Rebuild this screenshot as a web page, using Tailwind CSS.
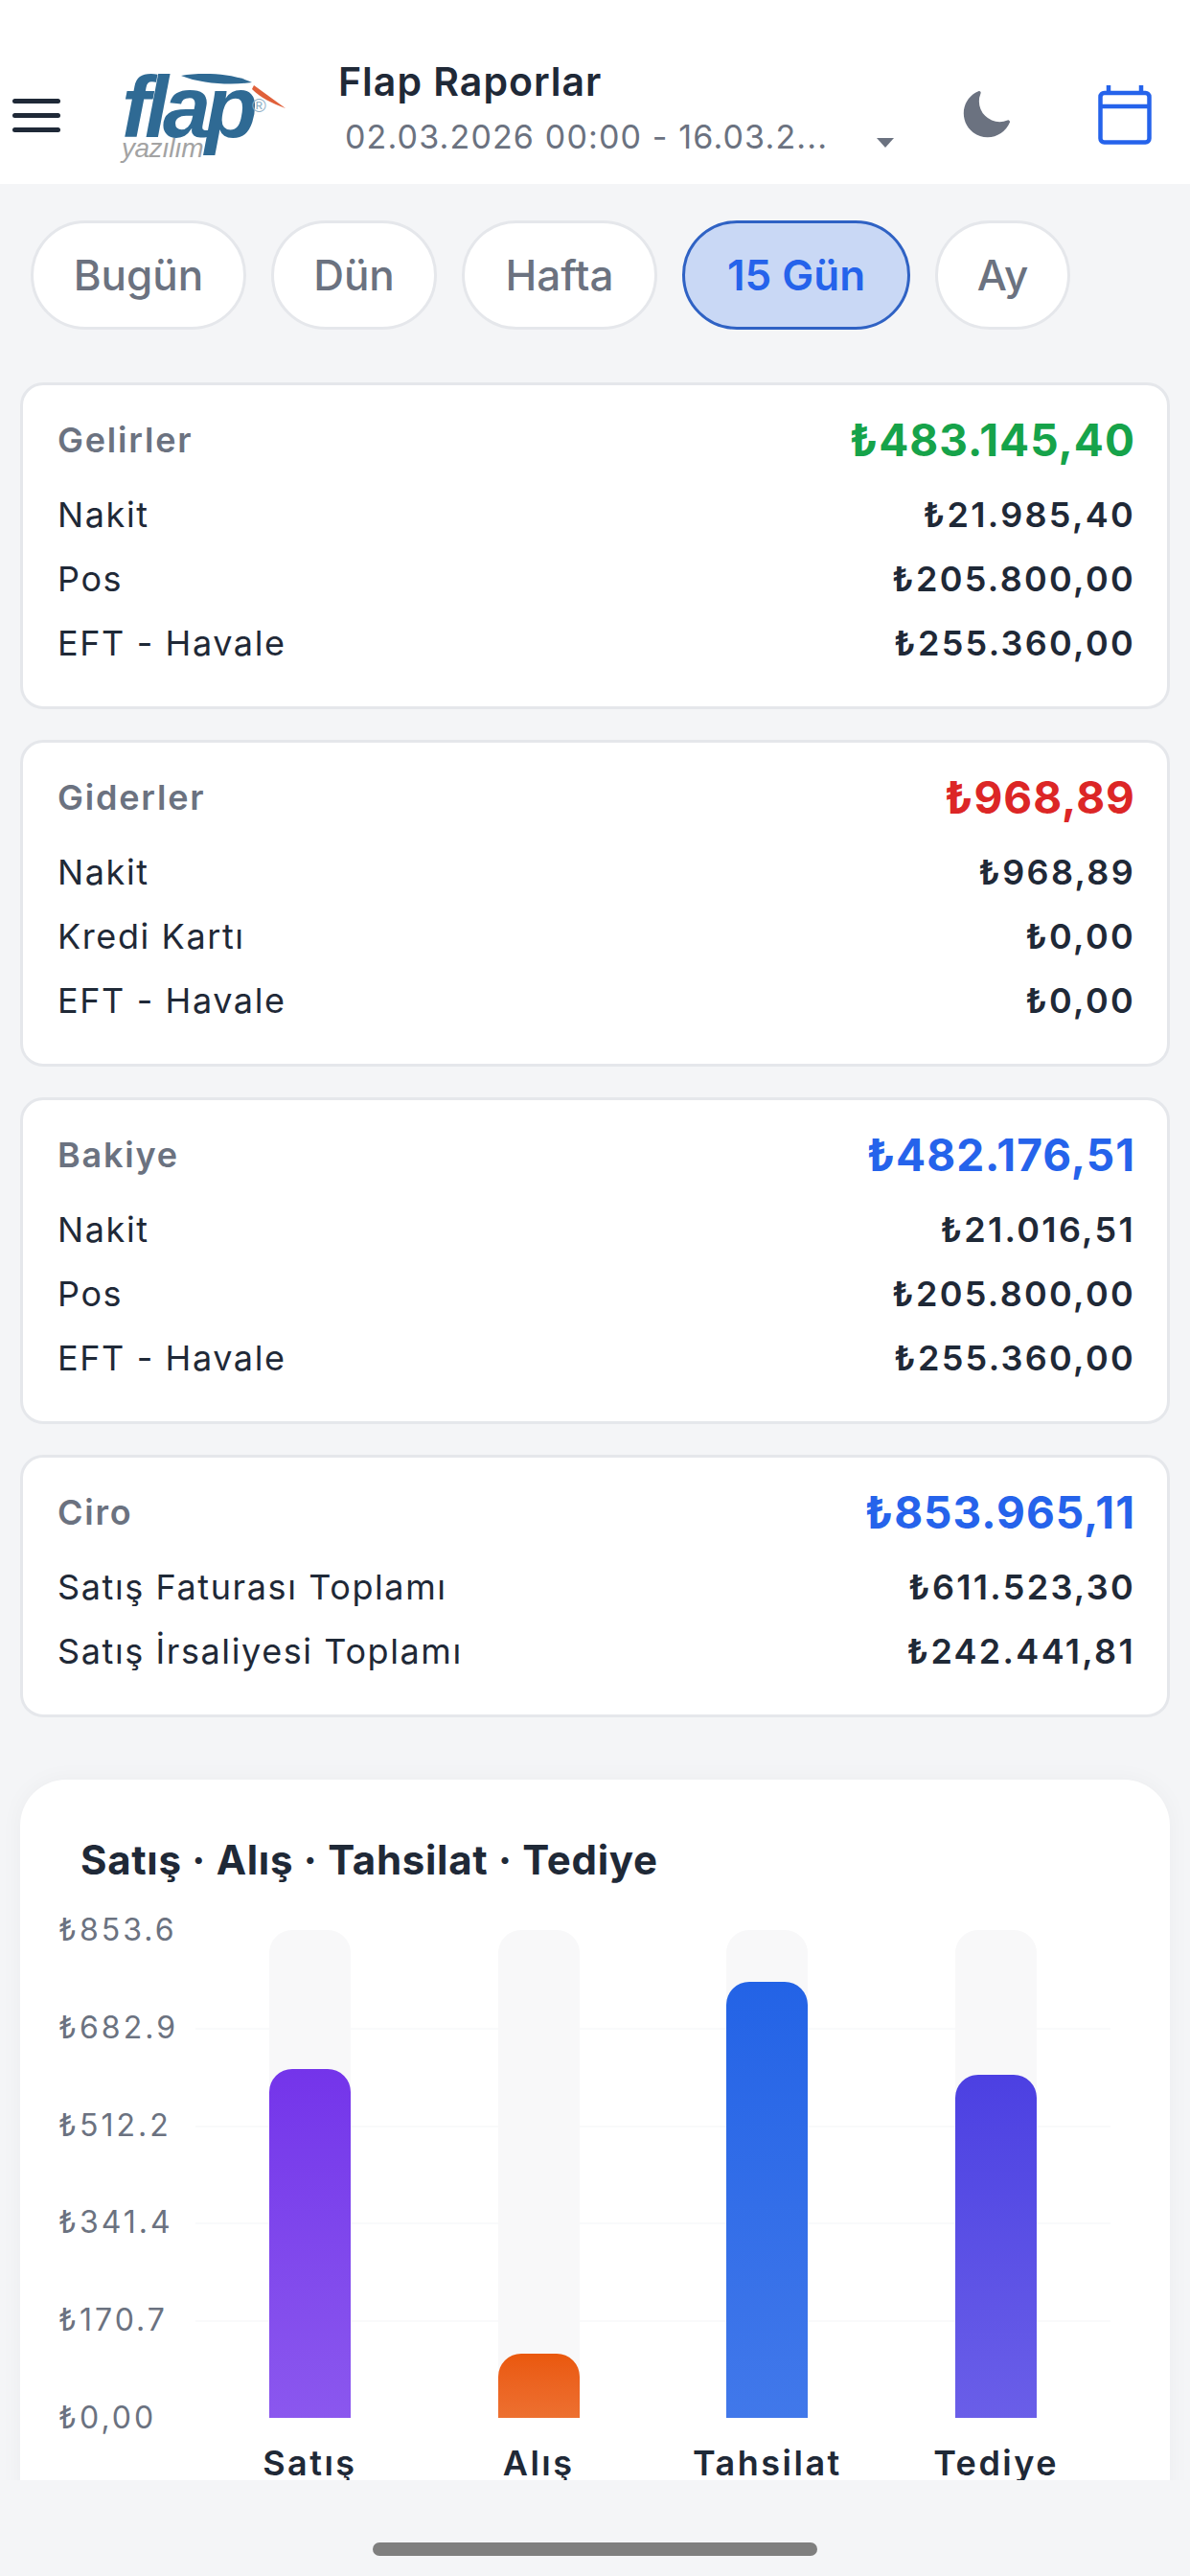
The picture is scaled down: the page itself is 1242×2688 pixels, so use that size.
<!DOCTYPE html>
<html lang="tr">
<head>
  <meta charset="UTF-8" />
  <title>Flap Raporlar</title>
  <script src="https://cdn.jsdelivr.net/npm/@tailwindcss/browser@4"></script>
</head>
<body class="bg-[#f4f5f7] text-[#1f2937] font-['Inter','Noto_Sans',sans-serif]">
  <div class="w-[1242px] h-[2688px] flex flex-col overflow-hidden">

    <!-- header -->
    <header class="h-[192px] shrink-0 bg-white flex items-start">
      <div class="w-[50px] ml-[13px] mt-[103px] flex flex-col gap-[10px]">
        <span class="h-[5px] bg-[#1f2937] rounded-full"></span>
        <span class="h-[5px] bg-[#1f2937] rounded-full"></span>
        <span class="h-[5px] bg-[#1f2937] rounded-full"></span>
      </div>

      <!-- logo -->
      <div class="relative w-[176px] h-[96px] ml-[64px] mt-[72px] shrink-0">
        <span class="absolute left-[0px] top-[-10px] text-[90px] leading-[100px] font-['Liberation_Sans'] font-bold italic tracking-[-6px] text-[#2f6a94]">flap</span>
        <span class="absolute left-[0px] top-[70px] text-[28px] leading-[26px] font-['Liberation_Sans'] italic tracking-[-0.5px] text-[#a3a3a3]">yazılım</span>
        <span class="absolute left-[136px] top-[28px] text-[20px] leading-[20px] font-['Liberation_Sans'] text-[#8fb0c6]">®</span>
        <svg class="absolute left-0 top-0" width="176" height="60" viewBox="0 0 176 60">
          <path d="M62 7C85 3 118 5 136 14C116 17 84 16 62 7Z" fill="#2f6a94" />
          <path d="M138 17L171 41C157 36 145 30 136 21Z" fill="#e0603a" />
        </svg>
      </div>

      <div class="w-[640px] ml-[50px] mt-[60px] shrink-0">
        <div class="text-[41px] leading-[50px] font-semibold tracking-[1px]">Flap Raporlar</div>
        <div class="flex items-center mt-[11px] ml-[7px]">
          <span class="text-[34px] leading-[44px] tracking-[1.15px] text-[#6b7280] whitespace-nowrap">02.03.2026 00:00 - 16.03.2...</span>
          <span class="ml-[51px] mt-[12px] w-0 h-0 border-x-[9px] border-x-transparent border-t-[10px] border-t-[#6b7280]"></span>
        </div>
      </div>

      <svg class="ml-[11px] mt-[95px] shrink-0" width="50" height="50" viewBox="1.5 1.5 21 21" fill="#6b7280">
        <path d="M9.528 1.718a.75.75 0 01.162.819A8.97 8.97 0 009 6a9 9 0 009 9 8.97 8.97 0 003.463-.69.75.75 0 01.981.98 10.503 10.503 0 01-9.694 6.46c-5.799 0-10.5-4.701-10.5-10.5 0-4.368 2.667-8.112 6.46-9.694a.75.75 0 01.818.162z" />
      </svg>

      <svg class="ml-[92px] mt-[88px] shrink-0" width="56" height="63" viewBox="0 0 56 63" fill="none" stroke="#2563eb" stroke-width="4.5">
        <rect x="2.5" y="9" width="51" height="51.5" rx="4" />
        <path d="M2.5 23H53.5M11 1V9M45 1V9" />
      </svg>
    </header>

    <main class="h-[2396px] shrink-0 overflow-hidden">
      <!-- range pills -->
      <div class="flex gap-[26px] ml-[32px] mt-[38px] text-[44px] font-medium text-[#6b7280]">
        <button class="w-[225px] h-[114px] bg-white border-[3px] border-[#e5e7eb] rounded-full">Bugün</button>
        <button class="w-[173px] h-[114px] bg-white border-[3px] border-[#e5e7eb] rounded-full">Dün</button>
        <button class="w-[204px] h-[114px] bg-white border-[3px] border-[#e5e7eb] rounded-full">Hafta</button>
        <button class="w-[238px] h-[114px] bg-[#c9d8f5] border-[3px] border-[#2f62c4] rounded-full font-semibold text-[#2563eb]">15 Gün</button>
        <button class="w-[141px] h-[114px] bg-white border-[3px] border-[#e5e7eb] rounded-full">Ay</button>
      </div>

      <div class="mx-[21px] mt-[55px] flex flex-col gap-[32px]">
        <!-- Gelirler -->
        <section class="h-[341px] bg-white border-[3px] border-[#e5e7eb] rounded-[24px] pt-[27px] pl-[36px] pr-[33px]">
          <div class="h-[60px] mb-[14px] flex items-center justify-between">
            <span class="text-[36px] font-semibold tracking-[1.8px] text-[#6b7280]">Gelirler</span>
            <span class="text-[46px] font-bold tracking-[1px] text-[#16a34a]">₺483.145,40</span>
          </div>
          <div class="h-[67px] flex items-center justify-between text-[36px] tracking-[1.6px]"><span>Nakit</span><span class="font-semibold tracking-[2.3px]">₺21.985,40</span></div>
          <div class="h-[67px] flex items-center justify-between text-[36px] tracking-[1.6px]"><span>Pos</span><span class="font-semibold tracking-[2.3px]">₺205.800,00</span></div>
          <div class="h-[67px] flex items-center justify-between text-[36px] tracking-[1.6px]"><span>EFT - Havale</span><span class="font-semibold tracking-[2.3px]">₺255.360,00</span></div>
        </section>

        <!-- Giderler -->
        <section class="h-[341px] bg-white border-[3px] border-[#e5e7eb] rounded-[24px] pt-[27px] pl-[36px] pr-[33px]">
          <div class="h-[60px] mb-[14px] flex items-center justify-between">
            <span class="text-[36px] font-semibold tracking-[1.8px] text-[#6b7280]">Giderler</span>
            <span class="text-[46px] font-bold tracking-[1px] text-[#dc2626]">₺968,89</span>
          </div>
          <div class="h-[67px] flex items-center justify-between text-[36px] tracking-[1.6px]"><span>Nakit</span><span class="font-semibold tracking-[2.3px]">₺968,89</span></div>
          <div class="h-[67px] flex items-center justify-between text-[36px] tracking-[1.6px]"><span>Kredi Kartı</span><span class="font-semibold tracking-[2.3px]">₺0,00</span></div>
          <div class="h-[67px] flex items-center justify-between text-[36px] tracking-[1.6px]"><span>EFT - Havale</span><span class="font-semibold tracking-[2.3px]">₺0,00</span></div>
        </section>

        <!-- Bakiye -->
        <section class="h-[341px] bg-white border-[3px] border-[#e5e7eb] rounded-[24px] pt-[27px] pl-[36px] pr-[33px]">
          <div class="h-[60px] mb-[14px] flex items-center justify-between">
            <span class="text-[36px] font-semibold tracking-[1.8px] text-[#6b7280]">Bakiye</span>
            <span class="text-[46px] font-bold tracking-[1px] text-[#2563eb]">₺482.176,51</span>
          </div>
          <div class="h-[67px] flex items-center justify-between text-[36px] tracking-[1.6px]"><span>Nakit</span><span class="font-semibold tracking-[2.3px]">₺21.016,51</span></div>
          <div class="h-[67px] flex items-center justify-between text-[36px] tracking-[1.6px]"><span>Pos</span><span class="font-semibold tracking-[2.3px]">₺205.800,00</span></div>
          <div class="h-[67px] flex items-center justify-between text-[36px] tracking-[1.6px]"><span>EFT - Havale</span><span class="font-semibold tracking-[2.3px]">₺255.360,00</span></div>
        </section>

        <!-- Ciro -->
        <section class="h-[274px] bg-white border-[3px] border-[#e5e7eb] rounded-[24px] pt-[27px] pl-[36px] pr-[33px]">
          <div class="h-[60px] mb-[14px] flex items-center justify-between">
            <span class="text-[36px] font-semibold tracking-[1.8px] text-[#6b7280]">Ciro</span>
            <span class="text-[46px] font-bold tracking-[1px] text-[#2563eb]">₺853.965,11</span>
          </div>
          <div class="h-[67px] flex items-center justify-between text-[36px] tracking-[1.6px]"><span>Satış Faturası Toplamı</span><span class="font-semibold tracking-[2.3px]">₺611.523,30</span></div>
          <div class="h-[67px] flex items-center justify-between text-[36px] tracking-[1.6px]"><span>Satış İrsaliyesi Toplamı</span><span class="font-semibold tracking-[2.3px]">₺242.441,81</span></div>
        </section>

        <!-- chart -->
        <section class="mt-[33px] h-[800px] bg-white rounded-[48px] shadow-[0_0_24px_rgba(0,0,0,0.04)] pt-[57px] pl-[40px]">
          <h2 class="ml-[23px] text-[42px] leading-[54px] font-bold tracking-[0.7px]">Satış · Alış · Tahsilat · Tediye</h2>
          <div class="flex h-[509px] mt-[46px]">
            <div class="w-[143px] shrink-0 flex flex-col justify-between text-[32px] tracking-[3px] text-[#6b7280]">
              <span class="h-0 flex items-center">₺853.6</span>
              <span class="h-0 flex items-center">₺682.9</span>
              <span class="h-0 flex items-center">₺512.2</span>
              <span class="h-0 flex items-center">₺341.4</span>
              <span class="h-0 flex items-center">₺170.7</span>
              <span class="h-0 flex items-center">₺0,00</span>
            </div>
            <div class="relative w-[955px] grid grid-cols-4">
              <div class="absolute inset-x-0 top-[102px] h-[2px] bg-[#f9fafb]"></div>
              <div class="absolute inset-x-0 top-[204px] h-[2px] bg-[#f9fafb]"></div>
              <div class="absolute inset-x-0 top-[305px] h-[2px] bg-[#f9fafb]"></div>
              <div class="absolute inset-x-0 top-[407px] h-[2px] bg-[#f9fafb]"></div>
              <div class="relative w-[85px] mx-auto flex items-end bg-[#f8f8f9] rounded-t-[24px]">
                <div class="w-full h-[364px] rounded-t-[24px] bg-linear-to-b from-[#7434ea] to-[#8b57ee]"></div>
              </div>
              <div class="relative w-[85px] mx-auto flex items-end bg-[#f8f8f9] rounded-t-[24px]">
                <div class="w-full h-[67px] rounded-t-[24px] bg-linear-to-b from-[#ea580c] to-[#ed7030]"></div>
              </div>
              <div class="relative w-[85px] mx-auto flex items-end bg-[#f8f8f9] rounded-t-[24px]">
                <div class="w-full h-[455px] rounded-t-[24px] bg-linear-to-b from-[#2363e6] to-[#4178ea]"></div>
              </div>
              <div class="relative w-[85px] mx-auto flex items-end bg-[#f8f8f9] rounded-t-[24px]">
                <div class="w-full h-[358px] rounded-t-[24px] bg-linear-to-b from-[#4c40e2] to-[#6a5ee8]"></div>
              </div>
            </div>
          </div>
          <div class="ml-[143px] w-[955px] grid grid-cols-4 mt-[25px] text-center text-[36px] leading-[44px] font-semibold tracking-[2.5px]">
            <span>Satış</span>
            <span>Alış</span>
            <span>Tahsilat</span>
            <span>Tediye</span>
          </div>
        </section>
      </div>
    </main>

    <!-- home indicator -->
    <div class="flex-1 flex justify-center pt-[65px]">
      <span class="w-[464px] h-[14px] bg-[#7f7f7f] rounded-full"></span>
    </div>
  </div>
</body>
</html>
